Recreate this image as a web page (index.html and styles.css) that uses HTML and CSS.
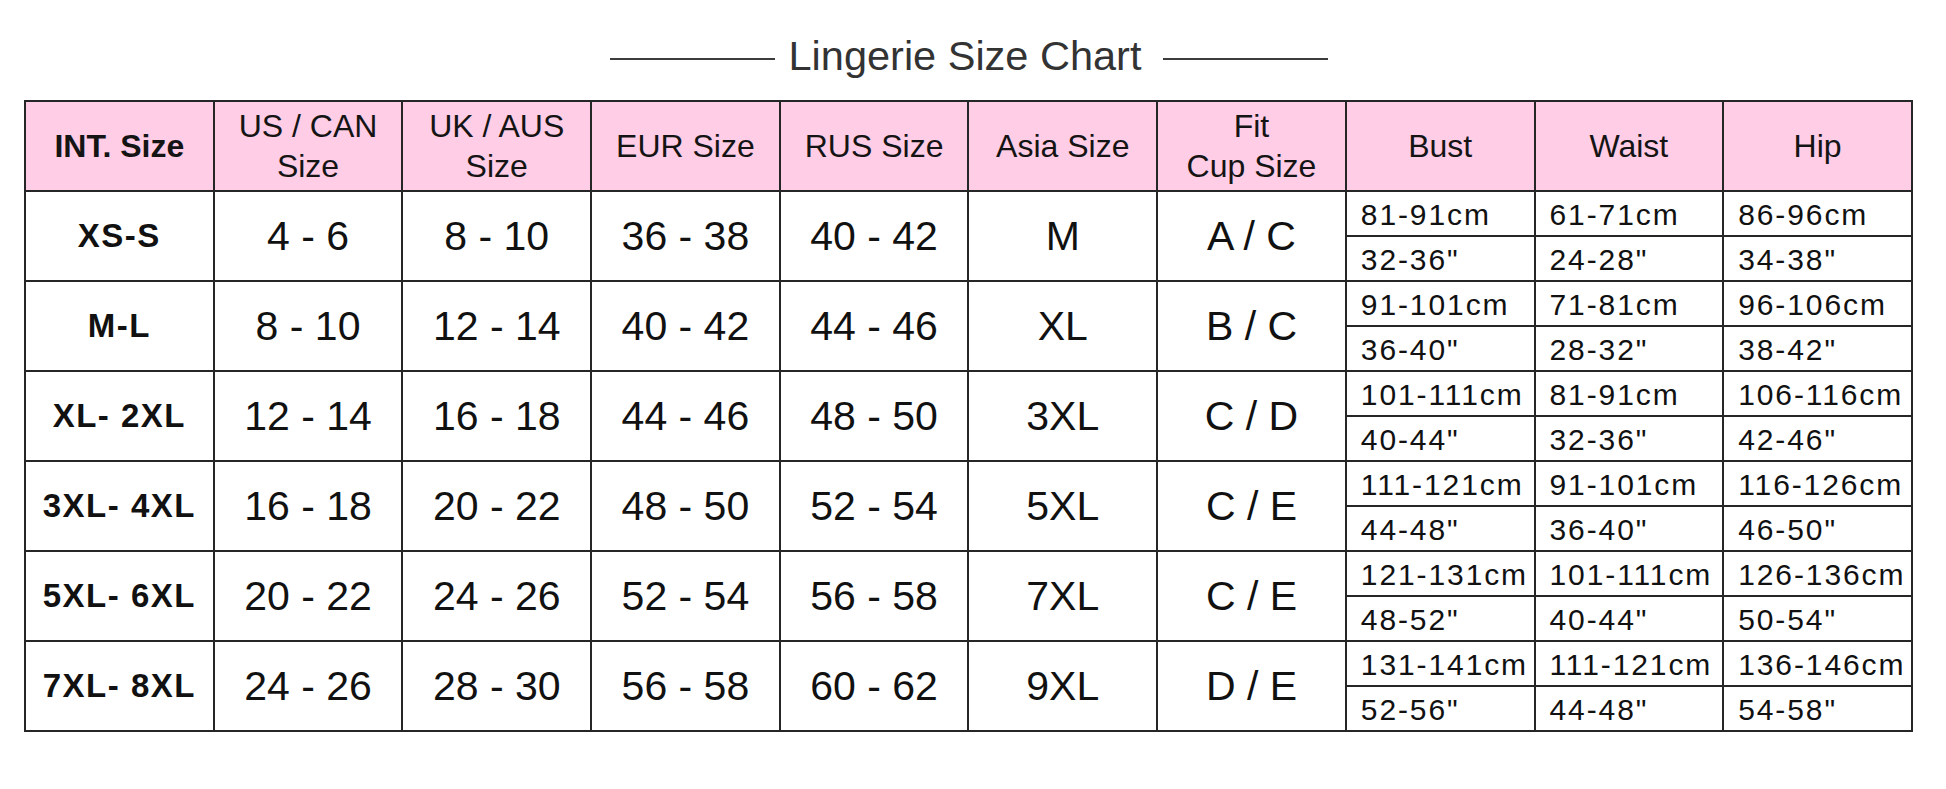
FILE: index.html
```html
<!DOCTYPE html>
<html lang="en">
<head>
<meta charset="utf-8">
<title>Lingerie Size Chart</title>
<link rel="stylesheet" href="styles.css">
</head>
<body>
<div class="page">
  <div class="title-bar">
    <span class="rule"></span>
    <h1 class="title">Lingerie Size Chart</h1>
    <span class="rule rule-right"></span>
  </div>
  <table class="chart">
    <colgroup>
      <col><col><col><col><col><col><col><col><col><col>
    </colgroup>
    <thead>
      <tr class="head-row">
        <th class="bold">INT. Size</th>
        <th>US / CAN<br>Size</th>
        <th>UK / AUS<br>Size</th>
        <th>EUR Size</th>
        <th>RUS Size</th>
        <th>Asia Size</th>
        <th>Fit<br>Cup Size</th>
        <th>Bust</th>
        <th>Waist</th>
        <th>Hip</th>
      </tr>
    </thead>
    <tbody>
      <tr class="sub-row">
        <td rowspan="2" class="int">XS-S</td>
        <td rowspan="2" class="val">4 - 6</td>
        <td rowspan="2" class="val">8 - 10</td>
        <td rowspan="2" class="val">36 - 38</td>
        <td rowspan="2" class="val">40 - 42</td>
        <td rowspan="2" class="val">M</td>
        <td rowspan="2" class="val">A / C</td>
        <td class="m">81-91cm</td><td class="m">61-71cm</td><td class="m">86-96cm</td>
      </tr>
      <tr class="sub-row">
        <td class="m">32-36"</td><td class="m">24-28"</td><td class="m">34-38"</td>
      </tr>
      <tr class="sub-row">
        <td rowspan="2" class="int">M-L</td>
        <td rowspan="2" class="val">8 - 10</td>
        <td rowspan="2" class="val">12 - 14</td>
        <td rowspan="2" class="val">40 - 42</td>
        <td rowspan="2" class="val">44 - 46</td>
        <td rowspan="2" class="val">XL</td>
        <td rowspan="2" class="val">B / C</td>
        <td class="m">91-101cm</td><td class="m">71-81cm</td><td class="m">96-106cm</td>
      </tr>
      <tr class="sub-row">
        <td class="m">36-40"</td><td class="m">28-32"</td><td class="m">38-42"</td>
      </tr>
      <tr class="sub-row">
        <td rowspan="2" class="int">XL- 2XL</td>
        <td rowspan="2" class="val">12 - 14</td>
        <td rowspan="2" class="val">16 - 18</td>
        <td rowspan="2" class="val">44 - 46</td>
        <td rowspan="2" class="val">48 - 50</td>
        <td rowspan="2" class="val">3XL</td>
        <td rowspan="2" class="val">C / D</td>
        <td class="m">101-111cm</td><td class="m">81-91cm</td><td class="m">106-116cm</td>
      </tr>
      <tr class="sub-row">
        <td class="m">40-44"</td><td class="m">32-36"</td><td class="m">42-46"</td>
      </tr>
      <tr class="sub-row">
        <td rowspan="2" class="int">3XL- 4XL</td>
        <td rowspan="2" class="val">16 - 18</td>
        <td rowspan="2" class="val">20 - 22</td>
        <td rowspan="2" class="val">48 - 50</td>
        <td rowspan="2" class="val">52 - 54</td>
        <td rowspan="2" class="val">5XL</td>
        <td rowspan="2" class="val">C / E</td>
        <td class="m">111-121cm</td><td class="m">91-101cm</td><td class="m">116-126cm</td>
      </tr>
      <tr class="sub-row">
        <td class="m">44-48"</td><td class="m">36-40"</td><td class="m">46-50"</td>
      </tr>
      <tr class="sub-row">
        <td rowspan="2" class="int">5XL- 6XL</td>
        <td rowspan="2" class="val">20 - 22</td>
        <td rowspan="2" class="val">24 - 26</td>
        <td rowspan="2" class="val">52 - 54</td>
        <td rowspan="2" class="val">56 - 58</td>
        <td rowspan="2" class="val">7XL</td>
        <td rowspan="2" class="val">C / E</td>
        <td class="m">121-131cm</td><td class="m">101-111cm</td><td class="m">126-136cm</td>
      </tr>
      <tr class="sub-row">
        <td class="m">48-52"</td><td class="m">40-44"</td><td class="m">50-54"</td>
      </tr>
      <tr class="sub-row">
        <td rowspan="2" class="int">7XL- 8XL</td>
        <td rowspan="2" class="val">24 - 26</td>
        <td rowspan="2" class="val">28 - 30</td>
        <td rowspan="2" class="val">56 - 58</td>
        <td rowspan="2" class="val">60 - 62</td>
        <td rowspan="2" class="val">9XL</td>
        <td rowspan="2" class="val">D / E</td>
        <td class="m">131-141cm</td><td class="m">111-121cm</td><td class="m">136-146cm</td>
      </tr>
      <tr class="sub-row">
        <td class="m">52-56"</td><td class="m">44-48"</td><td class="m">54-58"</td>
      </tr>
    </tbody>
  </table>
</div>
</body>
</html>
```
FILE: styles.css
```css
html, body {
  margin: 0;
  padding: 0;
  background: #ffffff;
}

body {
  font-family: "Liberation Sans", Arial, sans-serif;
  color: #111111;
}

.page {
  padding: 0 0 0 24px;
  width: 1890px;
}

.title-bar {
  box-sizing: border-box;
  height: 100px;
  padding-top: 32px;
  display: flex;
  justify-content: center;
  align-items: flex-start;
}

.title {
  margin: 0 22px 0 14px;
  font-size: 41.5px;
  line-height: 48px;
  font-weight: normal;
  color: #333333;
}

.rule {
  width: 165px;
  height: 2px;
  margin-top: 26px;
  background: #3c3c3c;
}

.chart {
  width: 1889px;
  table-layout: fixed;
  border-collapse: collapse;
}

.chart col {
  width: 10%;
}

.chart th,
.chart td {
  border: 2px solid #262626;
  padding: 0;
  text-align: center;
  vertical-align: middle;
}

.head-row {
  height: 90px;
}

.chart th {
  background: #ffcde6;
  font-size: 32px;
  line-height: 40px;
  font-weight: normal;
  color: #141414;
}

.chart th.bold {
  font-weight: bold;
}

.sub-row {
  height: 45px;
}

.int {
  font-size: 33px;
  font-weight: bold;
  letter-spacing: 1.5px;
}

.val {
  font-size: 41px;
}

.chart td.m {
  text-align: left;
  padding: 2px 0 0 14px;
  font-size: 30px;
  line-height: 34px;
  letter-spacing: 1.9px;
  white-space: nowrap;
  overflow: hidden;
}
```
